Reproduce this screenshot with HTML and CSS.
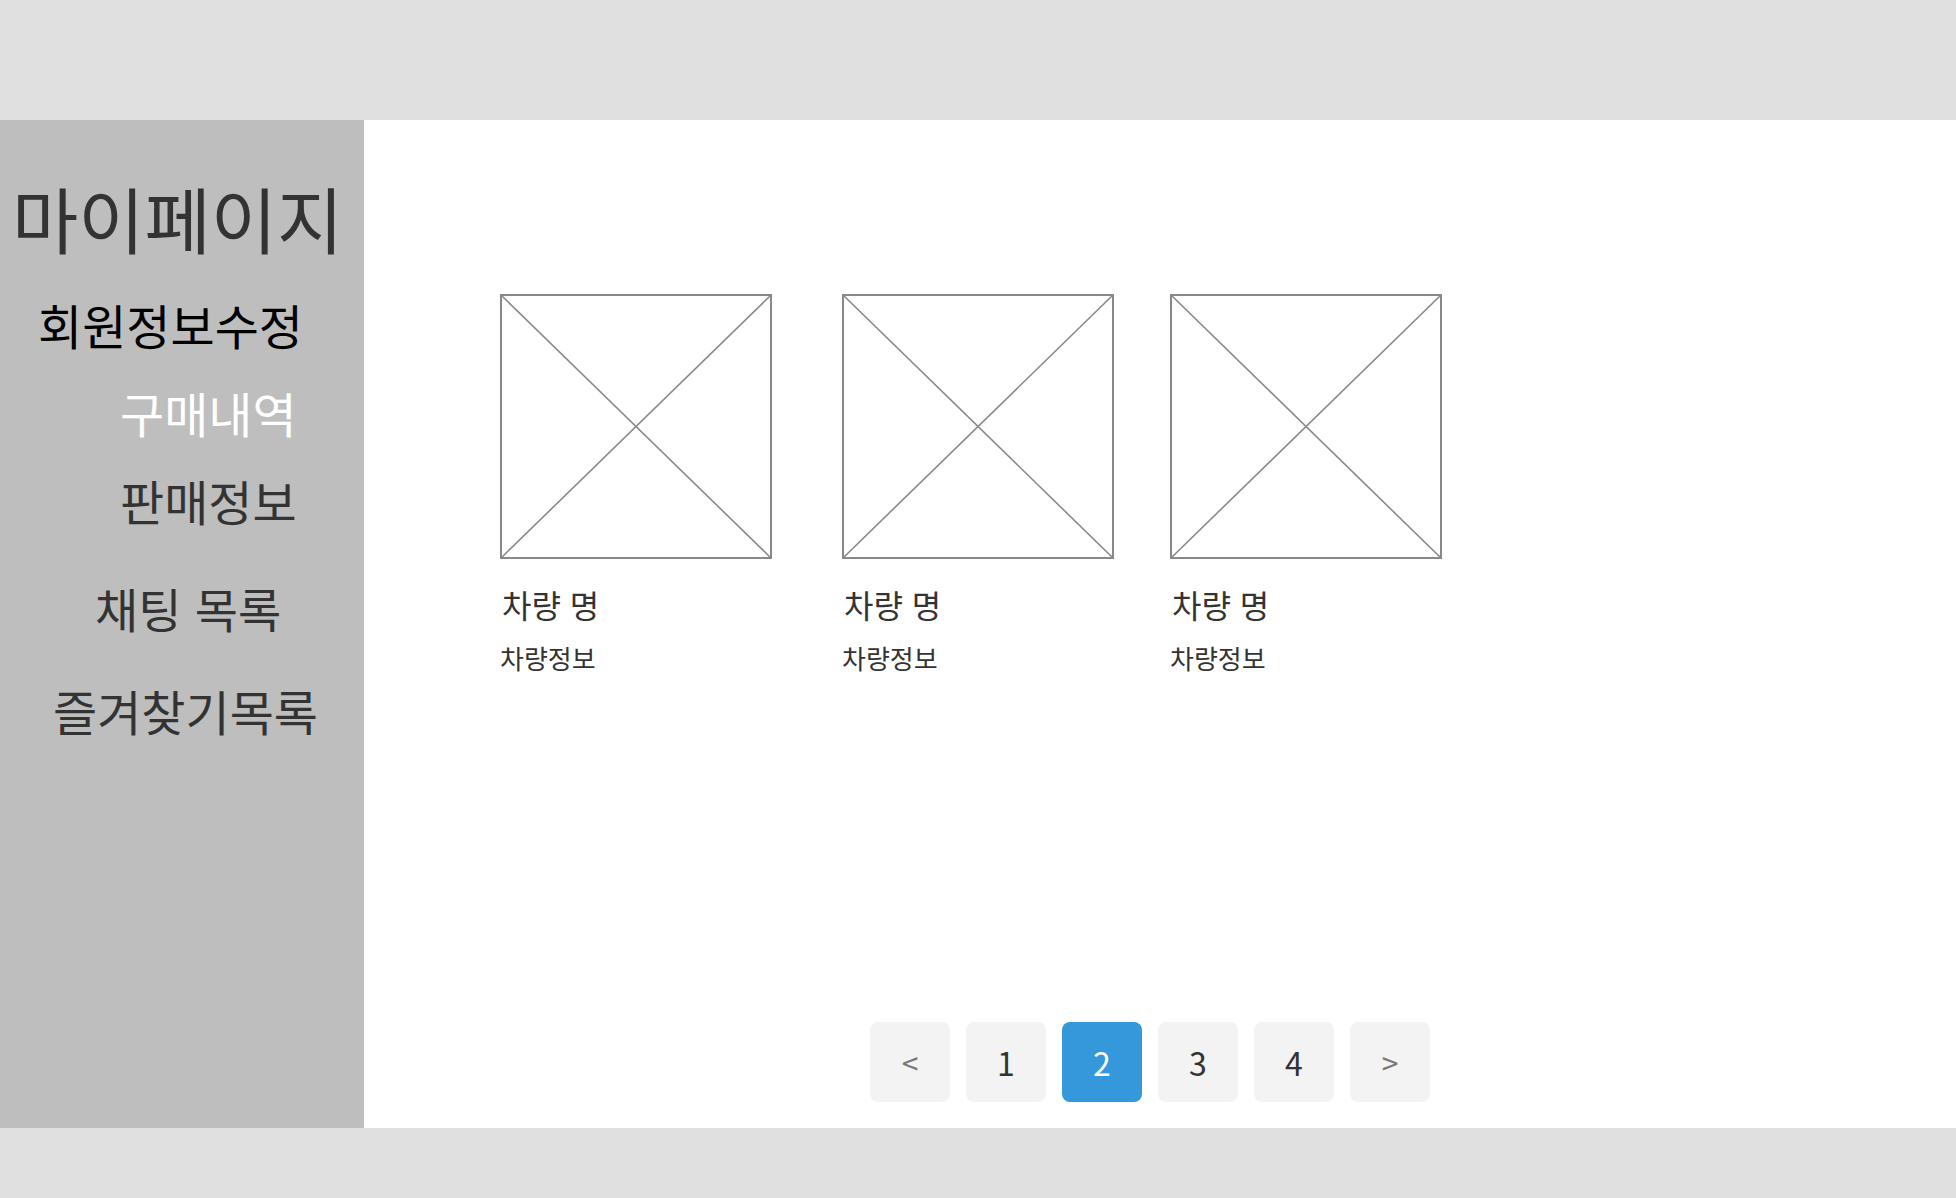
FILE: index.html
```html
<!DOCTYPE html>
<html lang="ko">
<head>
<meta charset="utf-8">
<title>마이페이지</title>
<link rel="stylesheet" href="styles.css">
</head>
<body>
<header class="topbar"></header>
<div class="layout">
  <aside class="sidebar">
    <h1 class="side-title">마이페이지</h1>
    <nav class="side-nav">
      <a class="side-link link-edit">회원정보수정</a>
      <a class="side-link link-buy">구매내역</a>
      <a class="side-link link-sell">판매정보</a>
      <a class="side-link link-chat">채팅 목록</a>
      <a class="side-link link-fav">즐겨찾기목록</a>
    </nav>
  </aside>
  <main class="content">
    <section class="cards">
      <div class="card">
        <div class="thumb"><svg viewBox="0 0 272 265" preserveAspectRatio="none"><line x1="0" y1="0" x2="272" y2="265"/><line x1="272" y1="0" x2="0" y2="265"/></svg></div>
        <div class="card-name">차량 명</div>
        <div class="card-info">차량정보</div>
      </div>
      <div class="card">
        <div class="thumb"><svg viewBox="0 0 272 265" preserveAspectRatio="none"><line x1="0" y1="0" x2="272" y2="265"/><line x1="272" y1="0" x2="0" y2="265"/></svg></div>
        <div class="card-name">차량 명</div>
        <div class="card-info">차량정보</div>
      </div>
      <div class="card">
        <div class="thumb"><svg viewBox="0 0 272 265" preserveAspectRatio="none"><line x1="0" y1="0" x2="272" y2="265"/><line x1="272" y1="0" x2="0" y2="265"/></svg></div>
        <div class="card-name">차량 명</div>
        <div class="card-info">차량정보</div>
      </div>
    </section>
    <nav class="pager">
      <span class="page arrow">&lt;</span>
      <span class="page">1</span>
      <span class="page active">2</span>
      <span class="page">3</span>
      <span class="page">4</span>
      <span class="page arrow">&gt;</span>
    </nav>
  </main>
</div>
<footer class="bottombar"></footer>
</body>
</html>
```
FILE: styles.css
```css
* { box-sizing: border-box; }
html, body { margin: 0; padding: 0; }
body {
  font-family: "Noto Sans CJK KR", "Noto Sans", sans-serif;
  color: #333;
  background: #fff;
}
.topbar { height: 120px; background: #e0e0e0; }
.bottombar { height: 70px; background: #e0e0e0; }
.layout { display: flex; height: 1008px; }
.sidebar {
  width: 364px;
  flex: 0 0 364px;
  background: #bebebe;
  padding-top: 61px;
  display: flex;
  flex-direction: column;
}
.side-title {
  margin: 0;
  padding-left: 12px;
  font-size: 72px;
  font-weight: 400;
  line-height: 1;
  color: #333;
  white-space: nowrap;
}
.side-nav { display: flex; flex-direction: column; }
.side-link {
  display: block;
  font-size: 48px;
  line-height: 1;
  color: #333;
  white-space: nowrap;
}
.link-edit { margin-top: 47px; padding-left: 38px; color: #000; }
.link-buy { margin-top: 40px; padding-left: 120px; color: #fff; }
.link-sell { margin-top: 40px; padding-left: 120px; }
.link-chat { margin-top: 60px; padding-left: 95px; font-size: 47px; }
.link-fav { margin-top: 55px; padding-left: 53px; }

.content {
  flex: 1;
  display: flex;
  flex-direction: column;
}
.cards {
  padding: 174px 0 0 136px;
  display: grid;
  grid-template-columns: 342px 328px 272px;
}
.thumb {
  width: 272px;
  height: 265px;
  border: 2px solid #888;
}
.thumb svg { display: block; width: 100%; height: 100%; }
.thumb line { stroke: #888; stroke-width: 1.6; }
.card-name {
  margin-top: 29px;
  padding-left: 2px;
  font-size: 32px;
  line-height: 1;
  color: #333;
}
.card-info {
  margin-top: 25px;
  font-size: 26px;
  line-height: 1;
  color: #333;
}
.pager {
  margin-top: auto;
  padding: 0 20px 26px 0;
  display: flex;
  justify-content: center;
  gap: 16px;
}
.page {
  width: 80px;
  height: 80px;
  border-radius: 8px;
  background: #f3f3f3;
  display: flex;
  align-items: center;
  justify-content: center;
  font-size: 32px;
  color: #333;
}
.page.arrow { color: #777; font-size: 30px; }
.page.active { background: #3498db; color: #fff; }
```
